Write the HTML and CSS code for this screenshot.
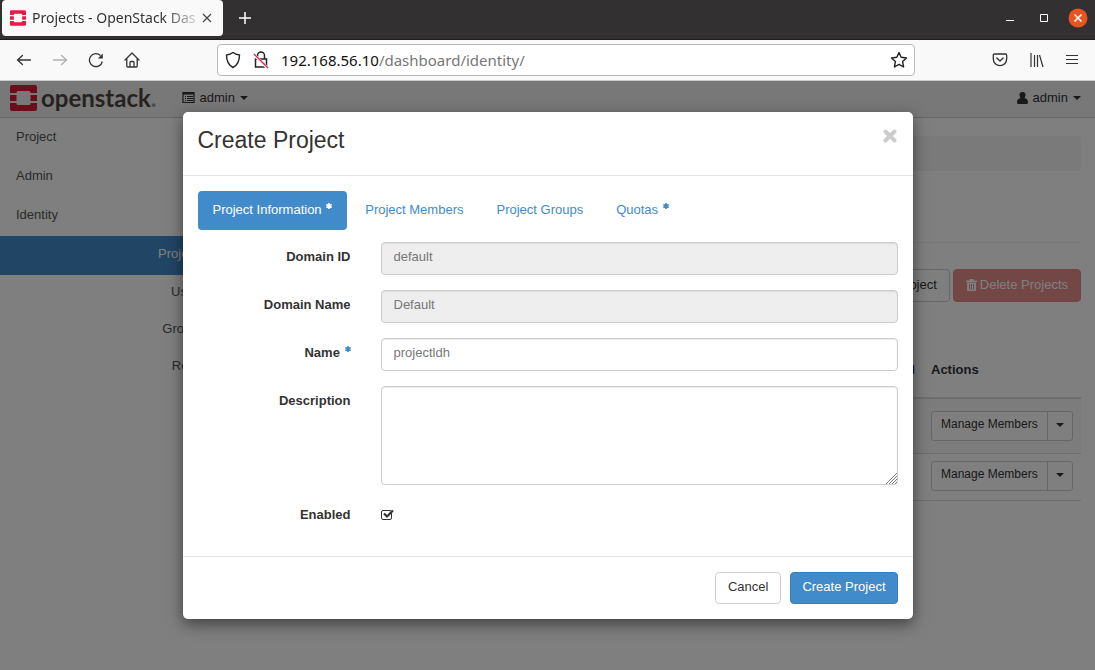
FILE: index.html
```html
<!DOCTYPE html>
<html lang="en">
<head>
<meta charset="utf-8">
<title>Projects - OpenStack Dashboard</title>
<link rel="stylesheet" href="styles.css">
</head>
<body>
<svg class="defs" aria-hidden="true">
  <symbol id="mark" viewBox="0 0 27 26">
    <path d="M2 0h23a2 2 0 0 1 2 2v6h-6.500V7.500a1.500 1.500 0 0 0-1.500-1.500h-11A1.500 1.500 0 0 0 6.500 7.500V8H0V2a2 2 0 0 1 2-2zM0 10h6.500v6H0zM20.500 10H27v6h-6.500zM0 18h6.500v.5A1.500 1.500 0 0 0 8 20h11a1.500 1.500 0 0 0 1.500-1.500V18H27v6a2 2 0 0 1-2 2H2a2 2 0 0 1-2-2z" fill="currentColor"/>
  </symbol>
  <symbol id="star" viewBox="0 0 6 6">
    <path d="M3 0v6M.3 1.400l5.400 3.200M5.700 1.400L.3 4.600" stroke="currentColor" stroke-width="1.700"/>
  </symbol>
  <symbol id="caret" viewBox="0 0 8 4"><path d="M0 0h8L4 4z" fill="currentColor"/></symbol>
</svg>

<header class="titlebar">
  <div class="tab">
    <svg class="tab-mark" width="16" height="16"><use href="#mark" width="16" height="16"/></svg>
    <span class="tab-title">Projects - OpenStack Das</span>
    <button class="plain" aria-label="Close tab"><svg width="10" height="10" viewBox="0 0 10 10" stroke="#444" stroke-width="1.200"><path d="M1 1l8 8M9 1L1 9"/></svg></button>
  </div>
  <button class="plain new-tab" aria-label="New tab"><svg width="12" height="12" viewBox="0 0 12 12" stroke="#fff" stroke-width="1.500"><path d="M6 0v12M0 6h12"/></svg></button>
  <div class="window-buttons">
    <button class="plain" aria-label="Minimize"><svg width="8" height="8" viewBox="0 0 8 8"><path d="M0 6h8v1H0z" fill="#fff"/></svg></button>
    <button class="plain" aria-label="Maximize"><svg width="8" height="8" viewBox="0 0 8 8"><path d="M.5.5h7v7h-7z" fill="none" stroke="#fff"/></svg></button>
    <button class="plain close-window" aria-label="Close window"><svg width="20" height="20" viewBox="0 0 20 20"><circle cx="10" cy="10" r="9.500" fill="#e95420"/><path d="M6.500 6.500l7 7M13.500 6.500l-7 7" stroke="#fff" stroke-width="1.600"/></svg></button>
  </div>
</header>

<nav class="toolbar" aria-label="Browser">
  <div class="nav-buttons">
    <button class="plain" aria-label="Back"><svg width="16" height="16" viewBox="0 0 16 16" fill="none" stroke="#333" stroke-width="1.300" stroke-linecap="round" stroke-linejoin="round"><path d="M14.500 8H1.500M6.500 3.500L1.500 8l5 4.500"/></svg></button>
    <button class="plain" aria-label="Forward"><svg width="16" height="16" viewBox="0 0 16 16" fill="none" stroke="#b0b0b0" stroke-width="1.300" stroke-linecap="round" stroke-linejoin="round"><path d="M1.500 8h13M9.500 3.500l5 4.500-5 4.500"/></svg></button>
    <button class="plain" aria-label="Reload"><svg width="16" height="16" viewBox="0 0 16 16"><path d="M14.300 9.500A6.500 6.500 0 1 1 12.500 3.500" fill="none" stroke="#333" stroke-width="1.300"/><path d="M14.800 1.500v5H9.800z" fill="#333"/></svg></button>
    <button class="plain" aria-label="Home"><svg width="16" height="16" viewBox="0 0 16 16" fill="none" stroke="#333" stroke-width="1.300" stroke-linejoin="round" stroke-linecap="round"><path d="M1 8l7-7 7 7M2.800 6.500V14q0 1 1 1h8.400q1 0 1-1V6.500M6 15v-4.500q0-1 1-1h2q1 0 1 1V15"/></svg></button>
  </div>
  <div class="address">
    <svg width="16" height="18" viewBox="0 0 16 18" fill="none" stroke="#222" stroke-width="1.400" stroke-linejoin="round"><path d="M8 1.500c2 1.500 4.300 2.200 6.500 2.500 0 5.500-1.500 10-6.500 12.500C3 14 1.500 9.500 1.500 4 3.700 3.700 6 3 8 1.500z"/></svg>
    <svg width="16" height="18" viewBox="0 0 16 18" fill="none"><path d="M2.500 8h11v8h-11zM4.500 8V4.500a3.500 3.500 0 0 1 7 0V8" stroke="#222" stroke-width="1.500"/><path d="M1 3.500l13.500 13.500" stroke="#fff" stroke-width="3"/><path d="M1 3l14 14" stroke="#e22850" stroke-width="1.500"/></svg>
    <span class="url"><b>192.168.56.10</b>/dashboard/identity/</span>
    <button class="plain" aria-label="Bookmark"><svg width="18" height="18" viewBox="0 0 18 18" fill="none" stroke="#222" stroke-width="1.400" stroke-linejoin="round"><path d="M9 1.500l2.200 4.800 5.300.7-3.900 3.600 1 5.400L9 13.400 4.400 16l1-5.400L1.500 7l5.300-.7z"/></svg></button>
  </div>
  <div class="tool-buttons">
    <button class="plain" aria-label="Pocket"><svg width="16" height="14" viewBox="0 0 16 14" fill="none" stroke="#333" stroke-width="1.300" stroke-linecap="round" stroke-linejoin="round"><path d="M2.500 1h11q1.200 0 1.200 1.200V6a6.700 6.700 0 0 1-13.400 0V2.200Q1.300 1 2.500 1zM4.800 5L8 8l3.200-3"/></svg></button>
    <button class="plain" aria-label="Library"><svg width="14" height="16" viewBox="0 0 14 16" stroke="#333" stroke-width="1.200"><path d="M1 1v14M4.500 3v12M7.500 3v12M9.500 3l3.500 12"/></svg></button>
    <button class="plain" aria-label="Menu"><svg width="12" height="12" viewBox="0 0 12 12" stroke="#333"><path d="M0 1.500h12M0 5.500h12M0 9.500h12"/></svg></button>
  </div>
</nav>

<div class="viewport">
  <div class="topbar">
    <a class="brand" href="#"><svg width="27" height="26"><use href="#mark"/></svg><span class="wordmark">openstack<i>.</i></span></a>
    <button class="plain menu"><svg width="13" height="11" viewBox="0 0 13 11"><path d="M1 .5h11v10H1z" fill="none" stroke="currentColor" stroke-width="1.200"/><path d="M1 1h11v1.500H1zM3 4h1v1H3zM5 4h6v1H5zM3 6h1v1H3zM5 6h6v1H5zM3 8h1v1H3zM5 8h6v1H5z" fill="currentColor"/></svg>admin<svg width="8" height="4"><use href="#caret"/></svg></button>
    <button class="plain menu user"><svg width="11" height="12" viewBox="0 0 11 12"><path d="M5.500 0a3 3 0 0 1 3 3.200c0 1.200-.5 2.200-1.200 2.800 2.200.4 3.700 1.500 3.700 4.500Q11 12 9.500 12h-8Q0 12 0 10.500C0 7.500 1.500 6.400 3.700 6 3 5.400 2.500 4.400 2.500 3.200a3 3 0 0 1 3-3.200z" fill="currentColor"/></svg>admin<svg width="8" height="4"><use href="#caret"/></svg></button>
  </div>

  <div class="page">
    <nav class="sidebar" aria-label="Panels">
      <a href="#">Project</a>
      <a href="#">Admin</a>
      <a href="#">Identity</a>
      <a class="sub active" href="#">Projects</a>
      <a class="sub" href="#">Users</a>
      <a class="sub" href="#">Groups</a>
      <a class="sub" href="#">Roles</a>
    </nav>
    <main class="content">
      <div class="crumbs"></div>
      <div class="page-head"></div>
      <div class="actions">
        <button class="btn">Create Project</button>
        <button class="btn danger"><svg width="11" height="12" viewBox="0 0 11 12"><path d="M0 1.500h3.500V0h4v1.500H11V3H0zM1 3.500h9V11q0 1-1 1H2q-1 0-1-1zM3 5v5.500h1V5zM5 5v5.500h1V5zM7 5v5.500h1V5z" fill="currentColor" fill-rule="evenodd"/></svg>Delete Projects</button>
      </div>
      <table class="projects">
        <thead><tr><th>Enabled</th><th class="act">Actions</th></tr></thead>
        <tbody>
          <tr><td></td><td class="act"><div class="split"><button class="btn small">Manage Members</button><button class="btn small drop" aria-label="More actions"><svg width="8" height="4"><use href="#caret"/></svg></button></div></td></tr>
          <tr><td></td><td class="act"><div class="split"><button class="btn small">Manage Members</button><button class="btn small drop" aria-label="More actions"><svg width="8" height="4"><use href="#caret"/></svg></button></div></td></tr>
        </tbody>
      </table>
    </main>
  </div>

  <div class="backdrop">
    <form class="modal" role="dialog" aria-labelledby="modal-title">
      <div class="modal-head">
        <h3 id="modal-title">Create Project</h3>
        <button class="plain close" type="button" aria-label="Close"><svg width="14" height="14" viewBox="0 0 14 14"><path d="M2.500 2.500l9 9M11.500 2.500l-9 9" stroke="#ccc" stroke-width="4" stroke-linecap="round"/></svg></button>
      </div>
      <div class="modal-body">
        <div class="pills">
          <a class="active" href="#">Project Information <svg class="req" width="6" height="6"><use href="#star"/></svg></a>
          <a href="#">Project Members</a>
          <a href="#">Project Groups</a>
          <a href="#">Quotas <svg class="req" width="6" height="6"><use href="#star"/></svg></a>
        </div>
        <div class="fields">
          <label for="domain-id">Domain ID</label>
          <input class="field" id="domain-id" type="text" value="default" readonly>
          <label for="domain-name">Domain Name</label>
          <input class="field" id="domain-name" type="text" value="Default" readonly>
          <label for="name">Name <svg class="req" width="6" height="6"><use href="#star"/></svg></label>
          <input class="field" id="name" type="text" value="projectldh">
          <label for="description">Description</label>
          <div class="area"><textarea class="field" id="description"></textarea><svg class="grip" width="11" height="11" viewBox="0 0 11 11" stroke="#777"><path d="M0 11L11 0M3 11l8-8M6 11l5-5M9 11l2-2"/></svg></div>
          <label for="enabled">Enabled</label>
          <div class="check"><input id="enabled" type="checkbox" checked><svg width="13" height="11" viewBox="0 0 13 11"><path d="M3 4.500l3 3L12 1.500" fill="none" stroke="#333" stroke-width="2.200"/></svg></div>
        </div>
      </div>
      <div class="modal-foot">
        <button class="btn" type="button">Cancel</button>
        <button class="btn primary" type="submit">Create Project</button>
      </div>
    </form>
  </div>
</div>
</body>
</html>
```
FILE: styles.css
```css
* { box-sizing: border-box; }

body {
  margin: 0;
  min-height: 100vh;
  display: flex;
  flex-direction: column;
  font: 13px/19px "Liberation Sans", Arial, sans-serif;
  color: #333;
}

svg { flex: none; }
a { text-decoration: none; color: inherit; }
.defs { position: absolute; width: 0; height: 0; }

.plain {
  display: flex;
  align-items: center;
  padding: 0;
  border: 0;
  background: none;
  font: inherit;
  color: inherit;
}

/* Browser window */
.titlebar {
  display: flex;
  align-items: center;
  height: 40px;
  padding: 0 7px 4px 2px;
  background: #333031;
  border-bottom: 1px solid #1e1c1d;
}
.tab {
  display: flex;
  align-items: center;
  gap: 6px;
  width: 221px;
  height: 36px;
  padding: 0 11px 0 8px;
  border-radius: 4px;
  background: #f9f9fa;
  font: 14px/20px "Noto Sans", sans-serif;
}
.tab-mark { color: #ed1944; }
.tab-title {
  flex: 1;
  white-space: nowrap;
  mask-image: linear-gradient(to right, #000 80%, transparent 105%);
}
.new-tab { margin-left: 16px; }
.window-buttons {
  display: flex;
  align-items: center;
  gap: 26px;
  margin-left: auto;
}
.close-window { margin-left: -6px; }

.toolbar {
  display: flex;
  align-items: center;
  height: 41px;
  padding: 0 17px 0 16px;
  background: #f9f9fa;
  border-bottom: 1px solid #ccc;
}
.nav-buttons { display: flex; gap: 20px; margin-right: 77px; }
.address {
  display: flex;
  flex: 1;
  align-items: center;
  gap: 12px;
  height: 32px;
  padding: 0 6px 0 7px;
  border: 1px solid #bbb;
  border-radius: 4px;
  background: #fff;
  font: 15px/20px "Noto Sans", sans-serif;
}
.url { flex: 1; color: #777; }
.url b { font-weight: 400; color: #111; }
.tool-buttons {
  display: flex;
  align-items: center;
  gap: 22px;
  margin-left: 77px;
}

/* Dashboard */
.viewport {
  position: relative;
  flex: 1;
  display: flex;
  flex-direction: column;
  overflow: hidden;
  background: #fff;
}
.topbar {
  display: flex;
  align-items: center;
  height: 37px;
  padding: 0 14px 3px 10px;
  background: #f0f0f0;
  border-bottom: 1px solid #ccc;
}
.brand {
  display: flex;
  align-items: center;
  gap: 4px;
  color: #da1a32;
}
.wordmark {
  font: 700 24px/26px Lato, sans-serif;
  color: #4d4540;
}
.wordmark i { font-style: normal; color: #999; }
.menu { gap: 5px; margin-left: 25px; }
.menu.user { margin-left: auto; }

.page { display: flex; flex: 1; }
.sidebar { width: 221px; }
.sidebar a {
  display: block;
  padding: 9px 16px 11px;
  color: #555;
}
.sidebar .sub { padding: 7px 16px 11px; text-align: right; }
.sidebar .active {
  margin-top: 1px;
  padding: 8px 16px 12px;
  background: #428bca;
  color: #fff;
}
.content { flex: 1; padding: 18px 14px 0 15px; }
.crumbs { height: 35px; border-radius: 4px; background: #f5f5f5; }
.page-head { height: 72px; border-bottom: 1px solid #eee; }
.actions {
  display: flex;
  justify-content: flex-end;
  gap: 3px;
  margin-top: 26px;
}

.btn {
  display: flex;
  align-items: center;
  gap: 3px;
  padding: 4px 12px 7px;
  border: 1px solid #ccc;
  border-radius: 4px;
  background: #fff;
  font: inherit;
  color: #333;
  white-space: nowrap;
}
.actions .btn { padding: 5px 12px 7px; }
.btn.danger { background: #e68f8d; border-color: #e08886; color: #fff; }
.btn.primary { padding: 4px 11px 7px; background: #428bca; border-color: #357ebd; color: #fff; }
.btn.small { padding: 3px 9px 6px; border-radius: 3px; font-size: 12px; }
.split { display: flex; }
.split .btn:first-child { border-radius: 3px 0 0 3px; }
.btn.small.drop {
  padding: 3px 8px 6px;
  margin-left: -1px;
  border-radius: 0 3px 3px 0;
}

.projects {
  width: 100%;
  margin-top: 39px;
  border-collapse: collapse;
}
.projects th { height: 57px; padding: 0 8px; text-align: right; border-bottom: 2px solid #ddd; }
.projects .act { width: 158px; text-align: left; }
.projects td { padding: 7px 8px 9px; border-bottom: 1px solid #ddd; }
.projects tbody tr:first-child td { padding: 12px 8px; background: #f9f9f9; }

/* Create Project dialog */
.backdrop {
  position: absolute;
  inset: 0;
  padding: 31px 15px;
  background: rgba(0, 0, 0, 0.5);
}
.modal {
  max-width: 730px;
  margin: 0 auto;
  border-radius: 5px;
  background: #fff;
  box-shadow: 0 5px 15px rgba(0, 0, 0, 0.5);
}
.modal-head {
  display: flex;
  justify-content: space-between;
  align-items: flex-start;
  padding: 15px 15px 22px;
  border-bottom: 1px solid #e5e5e5;
}
.modal-head h3 { margin: 0; font-size: 23px; line-height: 26px; font-weight: 400; }
.close { padding: 2px 1px; }
.modal-body { padding: 15px 15px 32px; }

.pills { display: flex; gap: 3px; margin-bottom: 12px; }
.pills a {
  padding: 9px 15px 11px;
  border-radius: 4px;
  color: #428bca;
}
.pills .active { background: #428bca; color: #fff; }
.req { margin: 0 0 5px 1px; color: #428bca; }
.active .req { color: #fff; }

.fields {
  display: grid;
  grid-template-columns: 153px 1fr;
  gap: 15px 30px;
}
.fields label { padding-top: 5px; text-align: right; font-weight: 700; }
.field {
  display: block;
  width: 100%;
  padding: 4px 12px 8px;
  border: 1px solid #ccc;
  border-radius: 4px;
  background: #fff;
  box-shadow: inset 0 1px 1px rgba(0, 0, 0, 0.08);
  font: inherit;
  color: #777;
}
.field[readonly] { background: #eee; }
textarea.field { height: 99px; resize: none; }
.area { position: relative; }
.grip { position: absolute; right: 1px; bottom: 1px; pointer-events: none; }
.check { position: relative; padding-top: 10px; }
.check input {
  appearance: none;
  display: block;
  width: 11px;
  height: 10px;
  margin: 0;
  border: 1px solid #333;
  border-radius: 2px;
}
.check svg { position: absolute; left: 0; top: 9px; pointer-events: none; }

.modal-foot {
  display: flex;
  justify-content: flex-end;
  gap: 9px;
  padding: 15px;
  border-top: 1px solid #e5e5e5;
}
```
